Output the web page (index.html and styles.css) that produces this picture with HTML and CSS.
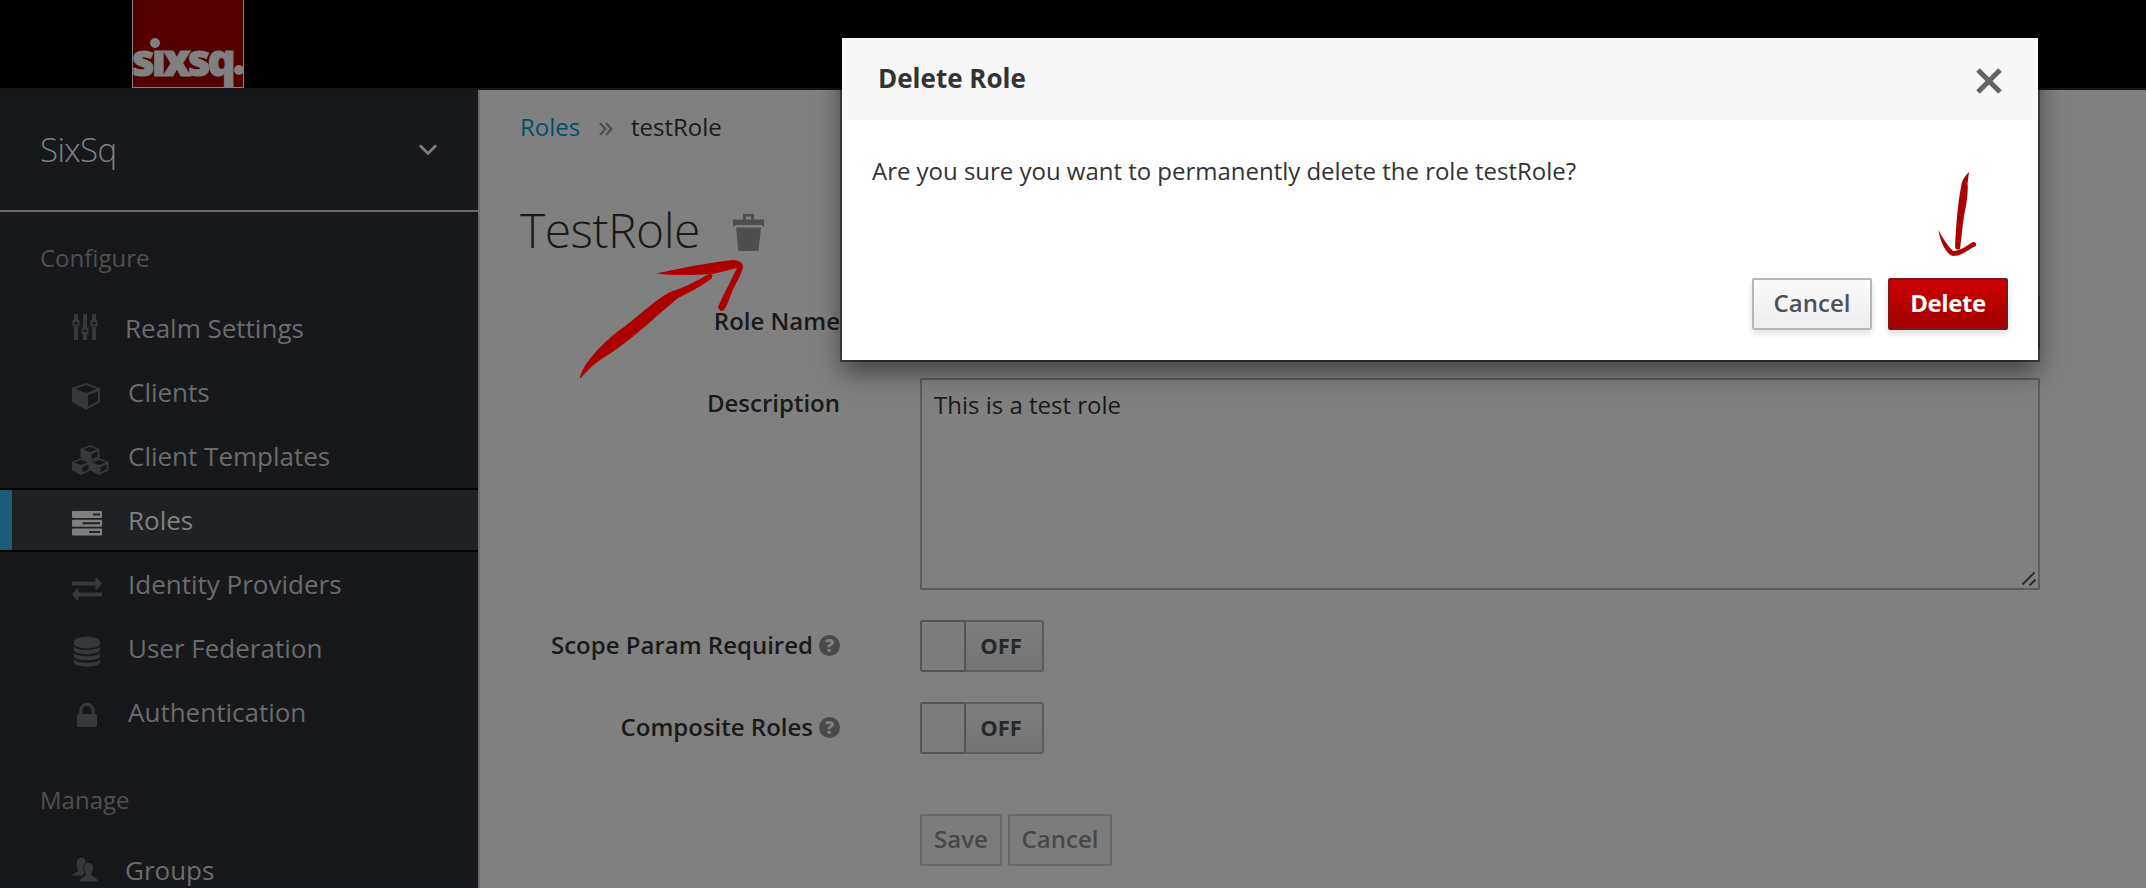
FILE: index.html
```
<!DOCTYPE html>
<html lang="en">
<head>
<meta charset="utf-8">
<title>Delete Role</title>
<link rel="stylesheet" href="styles.css">
</head>
<body>
<header class="topbar">
  <div class="logo"><span class="logo-text">sıxsq</span><i class="logo-dot logo-dot-i"></i><i class="logo-dot logo-dot-end"></i></div>
</header>
<div class="layout">
  <aside class="sidebar">
    <div class="realm"><span class="realm-name">SixSq</span>
      <svg class="chevron" width="20" height="14" viewBox="0 0 20 14"><path d="M2 2.500l8 8 8-8" fill="none" stroke="#808080" stroke-width="2.600"/></svg>
    </div>
    <h2 class="nav-heading">Configure</h2>
    <ul class="nav">
      <li class="nav-item tight"><svg class="icon" width="40" height="32" viewBox="0 0 40 32"><g fill="none" stroke="currentColor"><path d="M4 1v7M4 14v13M13 1v15M13 21v6M22 1v7M22 14v13" stroke-width="4"/><path d="M1.500 8h5v4.500h-5zM10.500 15.500h5V20h-5zM19.500 8h5v4.500h-5z" stroke-width="2"/></g></svg><span>Realm Settings</span></li>
      <li class="nav-item"><svg class="icon" width="40" height="32" viewBox="0 0 40 32"><path d="M14 3L28 8v14L14 30 0 22V8zM3 9l11 4 11-4-11-4zM16 15v11.500l10-5.500V11.500z" fill="currentColor" fill-rule="evenodd"/></svg><span>Clients</span></li>
      <li class="nav-item"><svg class="icon" width="40" height="32" viewBox="0 0 40 32"><g fill="currentColor" fill-rule="evenodd"><path d="M18 1l9.500 4v8.500L18 18l-9.500-4.500V5zM11 5.500L18 8l7-2.500L18 3zM19.500 10v5.500l6-3V7.500z"/><path d="M9.200 14l9.300 4v8.500L9.200 31 0 26.500V18zM2 18.500L9 21l7-2.500L9 16zM10.500 23v5.500l6-3v-5z"/><path d="M27 14l9.500 4v8.500L27 31l-9-4.500V18zM20 18.500l7 2.500 7-2.500-7-2.500zM28.500 23v5.500l6-3v-5z"/></g></svg><span>Client Templates</span></li>
      <li class="nav-item active"><svg class="icon" width="40" height="32" viewBox="0 0 40 32"><path fill="currentColor" fill-rule="evenodd" d="M1 4h28q1 0 1 1v5q0 1-1 1H1q-1 0-1-1V5q0-1 1-1zM21 6.500V8.500h7V6.500zM1 12.800h28q1 0 1 1v5q0 1-1 1H1q-1 0-1-1v-5q0-1 1-1zM10.500 15.200v2h17.500v-2zM1 21.500h28q1 0 1 1v5q0 1-1 1H1q-1 0-1-1v-5q0-1 1-1zM17 24v2h11v-2z"/></svg><span>Roles</span></li>
      <li class="nav-item"><svg class="icon" width="40" height="32" viewBox="0 0 40 32"><path fill="currentColor" d="M0 9.500h23.500V5.500h1.500l5 6-5 6h-1.500V13.500H0zM30 24.500H6.500v4H5l-5-6 5-6h1.500v4h23.500z"/></svg><span>Identity Providers</span></li>
      <li class="nav-item"><svg class="icon" width="40" height="32" viewBox="0 0 40 32"><path fill="currentColor" d="M2 6c0-7 26-7 26 0v1.500c0 6.500-26 6.500-26 0zM2 10.500c3 4.700 23 4.700 26 0V14c0 5.500-26 5.500-26 0zM2 17c3 4.500 23 4.500 26 0v3.500c0 5-26 5-26 0zM2 23.500c3 4.300 23 4.300 26 0v3c0 5.500-26 5.500-26 0z"/></svg><span>User Federation</span></li>
      <li class="nav-item"><svg class="icon" width="40" height="32" viewBox="0 0 40 32"><rect x="5" y="14" width="20" height="13" rx="1.500" fill="currentColor"/><path d="M8.800 15v-4.500a6.200 6.200 0 0 1 12.400 0V15" fill="none" stroke="currentColor" stroke-width="3"/></svg><span>Authentication</span></li>
    </ul>
    <h2 class="nav-heading manage">Manage</h2>
    <ul class="nav">
      <li class="nav-item tight"><svg class="icon" width="40" height="32" viewBox="0 0 40 32"><g fill="currentColor"><path d="M9 2.500c4 0 5 3 4.500 6-3 2-3 6-1.500 9l-1 3H0c1-3 6-2.500 6.500-5.500C4 11.500 3.500 2.500 9 2.500z"/><path d="M16.500 8c5.500 0 5.500 7 2.800 10.500-.5 4 5.700 3 6.700 8H7.500c1-5 7-4 6.300-8-2.800-3.500-2.800-10.500 2.700-10.500z"/></g></svg><span>Groups</span></li>
    </ul>
  </aside>
  <main class="content">
    <nav class="crumbs"><a class="crumb-link">Roles</a>
      <svg class="crumb-sep" width="14" height="14" viewBox="0 0 14 14"><path d="M1 1l5.300 6L1 13M7 1l5.300 6L7 13" fill="none" stroke="#4e4e4e" stroke-width="2.200"/></svg>
      <span>testRole</span></nav>
    <div class="title-row"><h1 class="title">TestRole</h1>
      <svg class="trash" width="31" height="37" viewBox="0 0 31 37"><path fill="#4e4e4e" fill-rule="evenodd" d="M10 0h11v5.500h10V13l-2.500-2H2.500L0 13V5.500h10zM13 2.500v3h5v-3zM3 13.500h25L25.500 37h-20z"/></svg>
    </div>
    <form class="form">
      <div class="row row-name"><label class="label">Role Name</label><div class="input"></div></div>
      <div class="row row-desc"><label class="label">Description</label><div class="textarea">This is a test role
        <svg class="grip" width="16" height="16" viewBox="0 0 16 16"><path d="M1.500 13.500l12-12M8.500 14.500l6-6" stroke="#2d2d2d" stroke-width="2"/></svg></div></div>
      <div class="row row-switch"><label class="label">Scope Param Required<span class="help">?</span></label><div class="switch"><span class="knob"></span><span class="off">OFF</span></div></div>
      <div class="row row-switch"><label class="label">Composite Roles<span class="help">?</span></label><div class="switch"><span class="knob"></span><span class="off">OFF</span></div></div>
      <div class="actions"><span class="btn-off save">Save</span><span class="btn-off cancel">Cancel</span></div>
    </form>
  </main>
</div>
<section class="modal">
  <div class="modal-head"><h3 class="modal-title">Delete Role</h3>
    <svg class="close" width="28" height="28" viewBox="0 0 28 28"><path d="M3 3l22 22M25 3L3 25" stroke="#636363" stroke-width="5"/></svg></div>
  <p class="modal-text">Are you sure you want to permanently delete the role testRole?</p>
  <div class="modal-actions"><span class="btn btn-cancel">Cancel</span><span class="btn btn-delete">Delete</span></div>
</section>
<svg class="ink" width="2146" height="888" viewBox="0 0 2146 888">
  <g fill="#ad0000">
    <path d="M657 273.500C672 270 705 263 733 260Q743 260 743 268Q741 273 738 280C731 291 729 303 724 310Q720 313 718 307C724 293 731 281 737 268L713 274C692 275 674 276 657 273.500z"/>
    <path d="M580 378C582 364 603 343 617 332C636 319 653 301 670 292C686 287 698 280 709 274Q715 274 711 279C697 289 686 294 678 298C655 317 635 337 611 353C599 360 590 367 581 378z"/>
    <path d="M1969 172C1966 175 1962 179 1961 187C1957 208 1956 230 1955 247Q1956 251 1960 249C1962 235 1963 218 1966 206C1968 194 1968 186 1967.500 184z"/>
    <path d="M1938.500 230C1943 239 1948 246 1953 251C1961 251 1967 245 1973 242Q1977 242 1976 246C1967 250 1962 256 1953 256C1947 255 1940 242 1938.500 230z"/>
  </g>
</svg>
</body>
</html>
```
FILE: styles.css
```
* { box-sizing: border-box; }
body { margin: 0; width: 2146px; height: 888px; overflow: hidden; position: relative; background: #808080; font: 24px/40px "Open Sans", sans-serif; color: #1a1a1a; }
h1, h2, h3, p, ul { margin: 0; padding: 0; font-weight: 400; }
.topbar { height: 90px; background: #000; border-bottom: 2px solid #161616; padding-left: 132px; }
.logo { position: relative; width: 112px; height: 88px; background: #550000; border: 1px solid #808080; border-top: 0; color: #808080; }
.logo-text { position: absolute; left: -1px; top: 29px; font: 800 44px/60px "Open Sans", sans-serif; letter-spacing: -3px; -webkit-text-stroke: 1px #808080; }
.logo-dot { position: absolute; border-radius: 50%; background: #808080; width: 10px; height: 10px; }
.logo-dot-i { left: 17px; top: 38px; }
.logo-dot-end { left: 101px; top: 65px; }
.layout { display: flex; height: 798px; }
.sidebar { width: 480px; background: #17181b; border-right: 2px solid #6b6b6b; overflow: hidden; }
.realm { height: 122px; border-bottom: 2px solid #6b6b6b; display: flex; align-items: center; justify-content: space-between; padding: 0 40px; color: #808080; font-size: 33px; font-weight: 300; letter-spacing: -0.6px; }
.chevron { flex: none; }
.nav-heading { font-size: 24px; line-height: 84px; height: 84px; padding: 4px 0 0 40px; color: #4f4f4f; }
.manage { height: 94px; padding-top: 14px; }
.nav { list-style: none; }
.nav-item { height: 64px; display: flex; align-items: center; padding: 0 0 1px 72px; font-size: 26px; color: #6b6b6b; }
.nav-item .icon { color: #35393d; width: 40px; margin: 8px 16px 0 0; flex: none; }
.nav-item.tight .icon { margin: 3px 13px 0 0; }
.nav-item.active { background: #1e2224; border-top: 2px solid #000; border-bottom: 2px solid #000; color: #808080; box-shadow: inset 12px 0 0 #1e5a7a; }
.nav-item.active .icon { color: #808080; margin-top: 6px; }
.content { flex: 1; padding: 17px 0 0 40px; }
.crumbs { display: flex; align-items: center; height: 40px; }
.crumb-link { color: #004d6e; width: 79px; }
.crumb-sep { margin-right: 18px; margin-top: 3px; }
.title-row { display: flex; height: 74px; margin-top: 46px; align-items: flex-start; }
.title { font-size: 48px; line-height: 74px; font-weight: 300; width: 213px; letter-spacing: -0.5px; }
.trash { margin-top: 21px; }
.form { margin-top: 29px; }
.row { display: flex; }
.label { width: 320px; font-weight: 600; text-align: right; margin-right: 80px; display: flex; justify-content: flex-end; align-items: center; height: 50px; }
.row-name { height: 82px; }
.row-desc { height: 242px; }
.row-switch { height: 82px; }
.input, .textarea { width: 1120px; border: 2px solid #5d5d5d; border-radius: 2px; }
.input { height: 52px; }
.textarea { height: 212px; padding: 5px 12px; position: relative; }
.grip { position: absolute; right: 1px; bottom: 1px; }
.help { width: 21px; height: 21px; border-radius: 50%; background: #4a4a4a; color: #808080; font-size: 18px; font-weight: 800; line-height: 21px; text-align: center; margin-left: 6px; }
.switch { width: 124px; height: 52px; border: 2px solid #5d5d5d; border-radius: 3px; background: linear-gradient(#7e7e7e, #747474); display: flex; }
.knob { width: 46px; height: 52px; margin: -2px 0 0 -2px; border: 2px solid #555; border-radius: 3px; background: #7d7d7d; }
.off { font-weight: 700; font-size: 22px; line-height: 46px; color: #26292c; flex: 1; text-align: center; padding-right: 6px; }
.actions { display: flex; gap: 6px; margin: 30px 0 0 400px; }
.btn-off { height: 52px; border: 2px solid #686868; border-radius: 2px; background: #7c7c7c; color: #484848; font-weight: 600; text-align: center; line-height: 45px; }
.save { width: 82px; }
.cancel { width: 104px; }
.modal { position: absolute; left: 842px; top: 38px; width: 1196px; height: 322px; background: #fff; box-shadow: 0 0 0 2px rgba(0,0,0,.45), 0 12px 24px rgba(0,0,0,.5); color: #333; }
.modal-head { height: 82px; background: #f7f7f7; display: flex; align-items: center; justify-content: space-between; padding: 0 35px 2px 36px; }
.modal-title { font-size: 26px; font-weight: 700; }
.close { margin-top: 5px; }
.modal-text { padding: 31px 30px 0; height: 158px; letter-spacing: -0.02px; }
.modal-actions { display: flex; justify-content: flex-end; gap: 16px; padding-right: 30px; }
.btn { width: 120px; height: 52px; border: 2px solid #b7b7b7; border-radius: 2px; font-weight: 600; line-height: 45px; text-align: center; box-shadow: 0 4px 6px rgba(3,3,3,.12); color: #4d5258; background: linear-gradient(#fafafa, #ededed); }
.btn-delete { border-color: #781919; color: #fff; font-weight: 700; letter-spacing: -0.4px; background: linear-gradient(#cc0000, #a30000); }
.ink { position: absolute; left: 0; top: 0; }
```
